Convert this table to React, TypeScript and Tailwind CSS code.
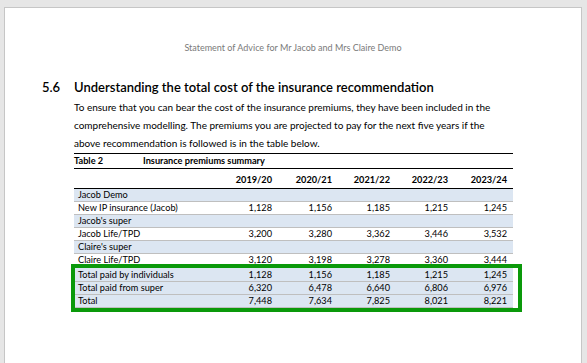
const years = ["2019/20", "2020/21", "2021/22", "2022/23", "2023/24"];

type Row = { label: string; values?: string[]; shaded?: boolean; gap?: boolean };

const rows: Row[] = [
  { label: "Jacob Demo", shaded: true },
  { label: "New IP insurance (Jacob)", values: ["1,128", "1,156", "1,185", "1,215", "1,245"] },
  { label: "Jacob's super", shaded: true },
  { label: "Jacob Life/TPD", values: ["3,200", "3,280", "3,362", "3,446", "3,532"] },
  { label: "Claire's super", shaded: true },
  { label: "Claire Life/TPD", values: ["3,120", "3,198", "3,278", "3,360", "3,444"] },
  { label: "Total paid by individuals", values: ["1,128", "1,156", "1,185", "1,215", "1,245"], shaded: true, gap: true },
  { label: "Total paid from super", values: ["6,320", "6,478", "6,640", "6,806", "6,976"], shaded: true },
  { label: "Total", values: ["7,448", "7,634", "7,825", "8,021", "8,221"], shaded: true },
];

export default function App() {
  return (
    <div className="h-[363px] w-[587px] overflow-hidden bg-[#e6e6e6] pl-[4px] pt-[7px] font-['Lato',sans-serif] text-black">
      <div className="h-[420px] w-[578px] border border-[#c6c6c6] bg-white">
        <div className="pt-[33px] text-center text-[9px] leading-[14px] text-[#7a7a7a]">
          Statement of Advice for Mr Jacob and Mrs Claire Demo
        </div>

        <div className="pl-[69px] pr-[60px] pt-[22px]">
          <div className="flex items-center whitespace-nowrap text-[13px] leading-[20px] font-semibold">
            <span className="-ml-[32px] w-[32px]">5.6</span>
            <span>Understanding the total cost of the insurance recommendation</span>
          </div>
          <p className="mt-[1px] text-[10px] leading-[18px]">
            To ensure that you can bear the cost of the insurance premiums, they have been included in the
            <br />
            comprehensive modelling. The premiums you are projected to pay for the next five years if the
            <br />
            above recommendation is followed is in the table below.
          </p>

          <div className="relative mt-[1px] w-[439px]">
            <table className="w-full table-fixed border-collapse text-[9.2px]">
              <colgroup>
                <col className="w-[145px]" />
                <col className="w-[59px]" />
                <col className="w-[60px]" />
                <col className="w-[58px]" />
                <col className="w-[58px]" />
                <col className="w-[59px]" />
              </colgroup>
              <thead>
                <tr className="h-[15px] border-t-[1.5px] border-b border-black">
                  <th colSpan={6} className="p-0 text-left font-bold leading-[14px]">
                    <span className="inline-block w-[69px]">Table 2</span>
                    Insurance premiums summary
                  </th>
                </tr>
                <tr className="h-[20px] border-b border-black">
                  <th className="p-0" />
                  {years.map((y) => (
                    <th key={y} className="pr-[6px] pt-[3px] text-right font-bold leading-[14px]">
                      {y}
                    </th>
                  ))}
                </tr>
              </thead>
              <tbody>
                {rows.map((r) => (
                  <tr key={r.label} className={`border-b border-[#bfbfbf] ${r.shaded ? "bg-[#dce6f2]" : "bg-white"} ${r.gap ? "h-[15px]" : "h-[13px]"}`}>
                    <td className={`pb-0 pl-[4px] leading-[12px] whitespace-nowrap ${r.gap ? "pt-[2px]" : "pt-0"}`}>{r.label}</td>
                    {years.map((y, i) => (
                      <td key={y} className={`pb-0 pr-[6px] text-right leading-[12px] ${r.gap ? "pt-[2px]" : "pt-0"}`}>
                        {r.values ? r.values[i] : ""}
                      </td>
                    ))}
                  </tr>
                ))}
              </tbody>
            </table>
            <div className="absolute left-[-3px] top-[111px] h-[48px] w-[451px] border-[4px] border-[#0a990a]" />
          </div>
        </div>
      </div>
    </div>
  );
}
